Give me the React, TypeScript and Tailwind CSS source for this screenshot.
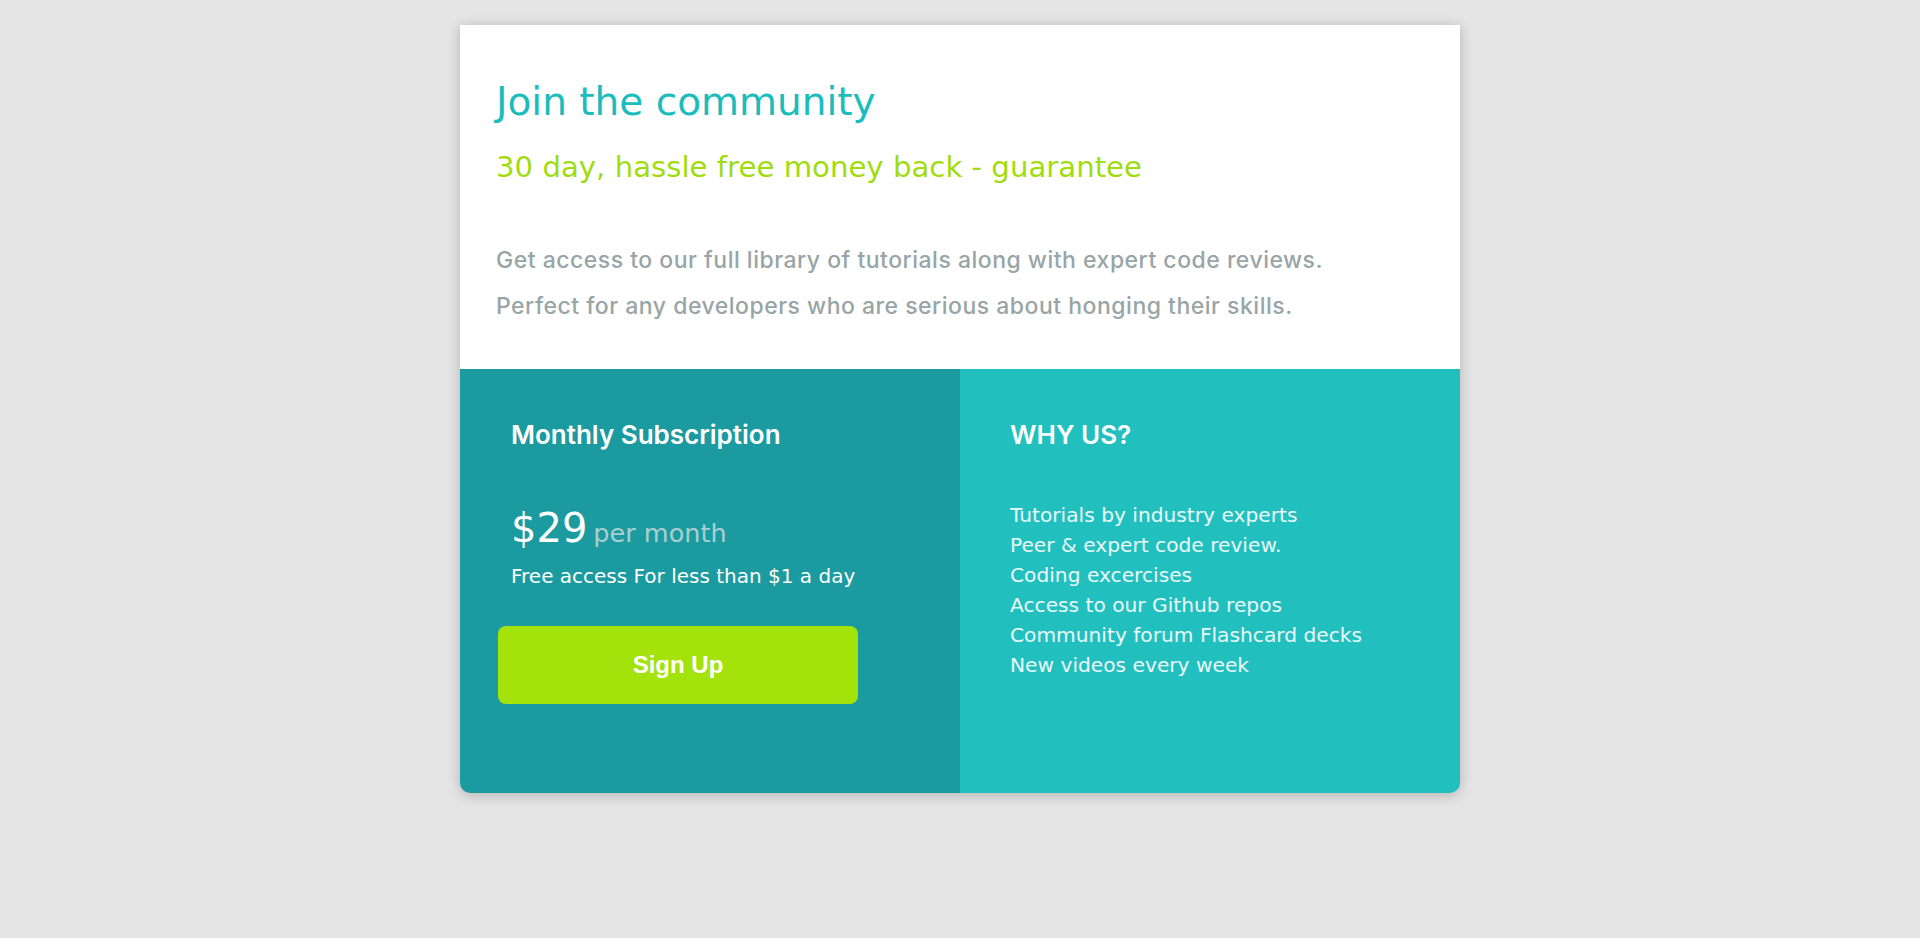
const perks = [
  "Tutorials by industry experts",
  "Peer & expert code review.",
  "Coding excercises",
  "Access to our Github repos",
  "Community forum Flashcard decks",
  "New videos every week",
];

export default function App() {
  return (
    <main className="min-h-screen bg-[#e5e5e5] pt-[25px] font-['DejaVu_Sans',sans-serif]">
      <div className="mx-auto w-[1000px] rounded-b-[10px] shadow-[0_2px_14px_rgba(0,0,0,0.22)]">
        {/* Intro */}
        <section className="h-[344px] bg-white pl-[36px] pt-[57px]">
          <h1 className="text-[39px] leading-[39px] text-[#1bbcbc]">Join the community</h1>
          <h2 className="mt-[32px] text-[29.2px] leading-[29px] text-[#a0dc0e]">
            30 day, hassle free money back - guarantee
          </h2>
          <div className="mt-[55px] font-['Inter',sans-serif] text-[23px] font-medium leading-[46px] tracking-[0.5px] text-[#98a5a6]">
            <p>Get access to our full library of tutorials along with expert code reviews.</p>
            <p>Perfect for any developers who are serious about honging their skills.</p>
          </div>
        </section>

        <div className="grid h-[424px] grid-cols-2 overflow-hidden rounded-b-[10px]">
          {/* Pricing */}
          <section className="bg-[#1b9aa0] pl-[38px] pt-[53px] text-white">
            <div className="pl-[13px]">
              <h3 className="font-['Inter',sans-serif] text-[26px] font-semibold leading-[26px]">
                Monthly Subscription
              </h3>
              <p className="mt-[60px] flex items-baseline gap-[6px] text-[40px] leading-[40px]">
                $29
                <span className="text-[25.5px] text-[#a9cfd1]">per month</span>
              </p>
              <p className="mt-[13px] text-[20px] leading-[20px]">Free access For less than $1 a day</p>
            </div>
            <button
              type="button"
              className="mt-[40px] flex h-[78px] w-[360px] items-center justify-center rounded-[8px] bg-[#a3e30b] font-['Liberation_Sans',Arial,sans-serif] text-[24px] font-bold text-white"
            >
              Sign Up
            </button>
          </section>

          {/* Why us */}
          <section className="bg-[#22bfbf] pl-[50px] pt-[53px] text-white">
            <h3 className="font-['Inter',sans-serif] text-[26px] font-semibold leading-[26px]">WHY US?</h3>
            <ul className="mt-[52px] text-[20.2px] leading-[30px] text-white/90">
              {perks.map((perk) => (
                <li key={perk}>{perk}</li>
              ))}
            </ul>
          </section>
        </div>
      </div>
    </main>
  );
}
